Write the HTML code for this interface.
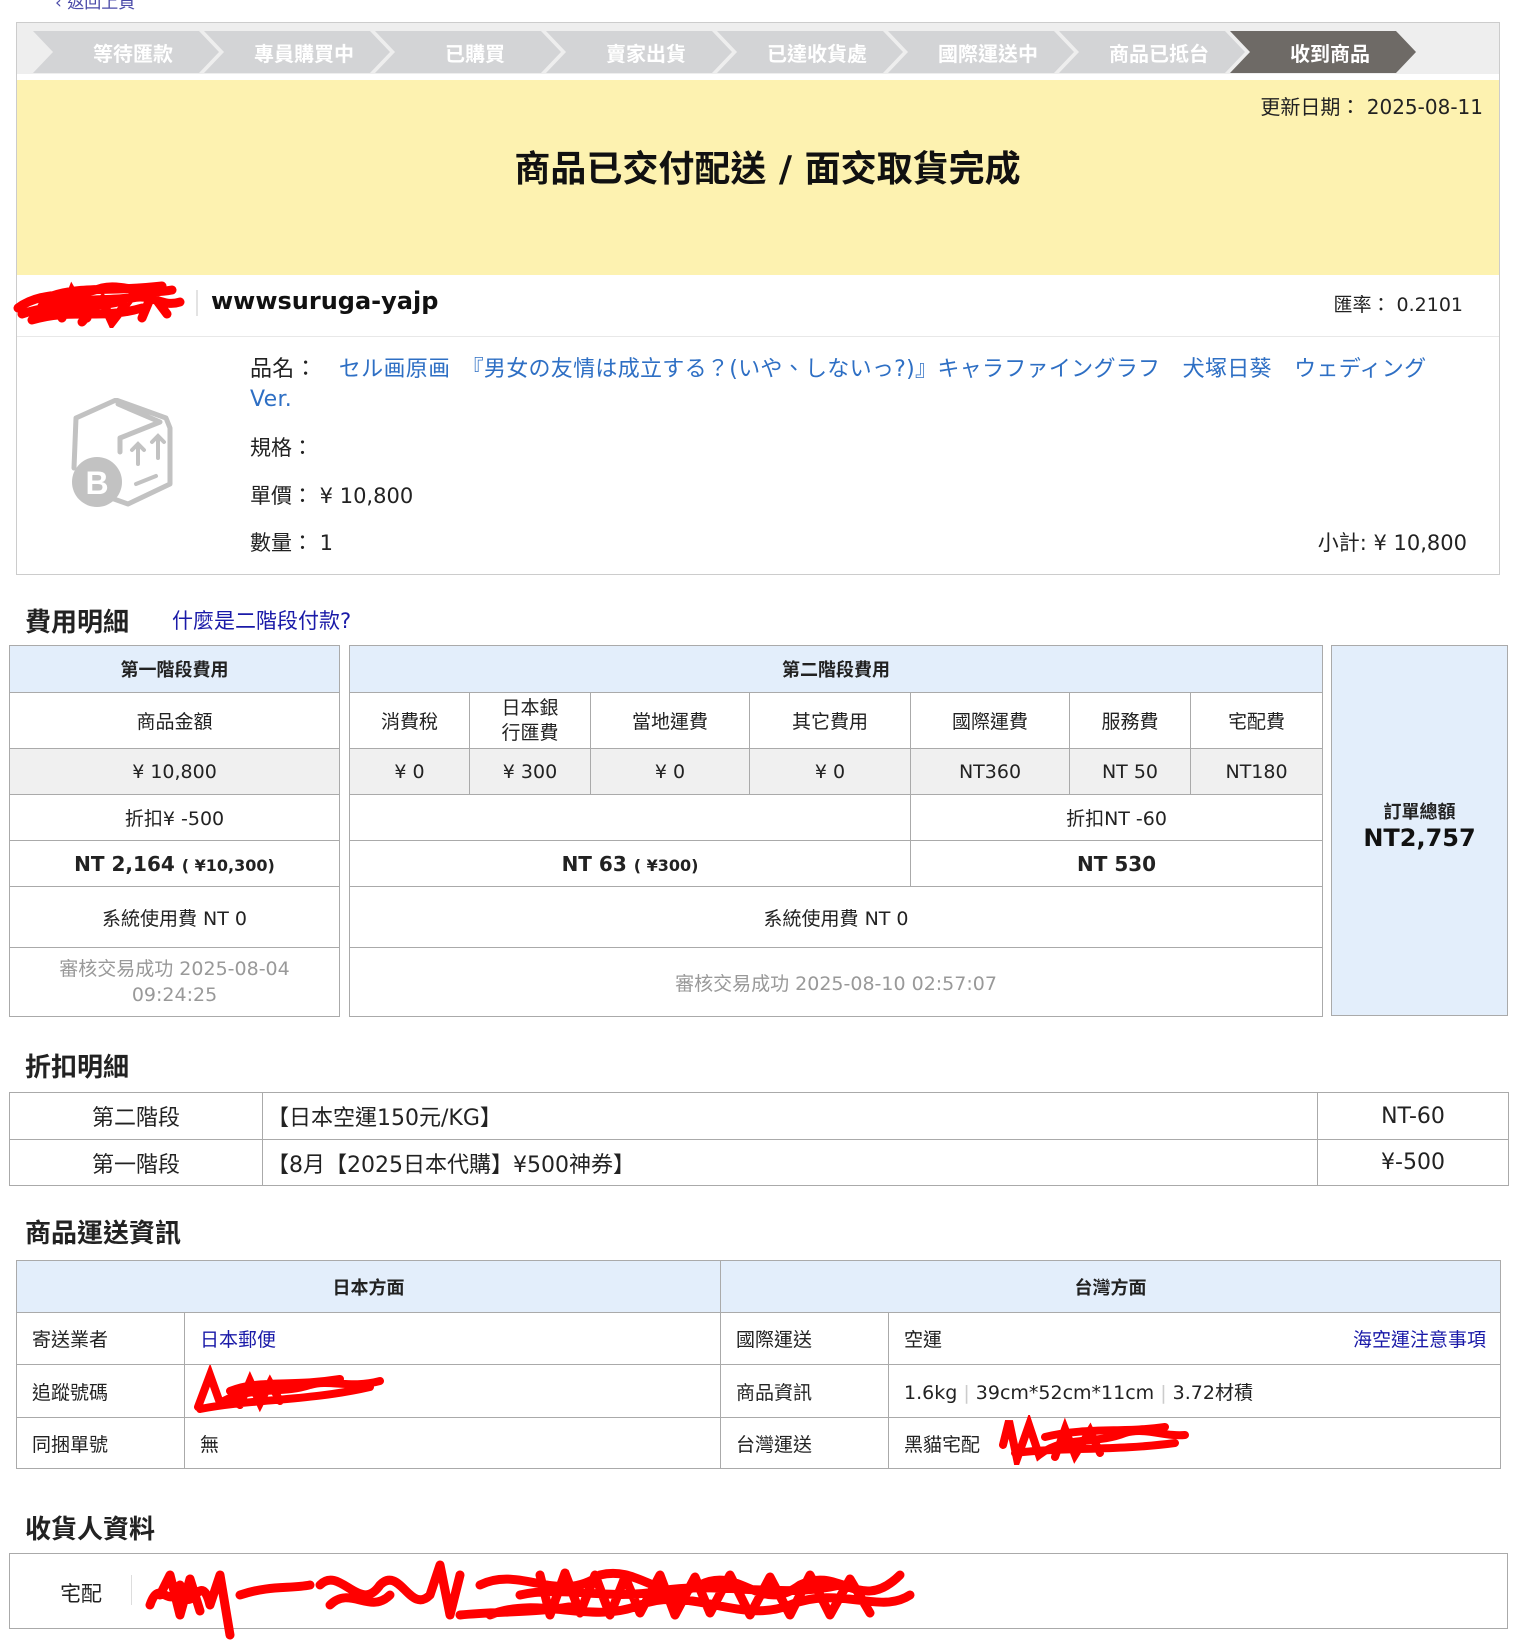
<!DOCTYPE html>
<html><head><meta charset="utf-8">
<style>
*{margin:0;padding:0;box-sizing:border-box}
body{width:1535px;height:1648px;background:#fff;position:relative;font-family:"DejaVu Sans","Noto Sans CJK TC",sans-serif;color:#222;overflow:hidden}
.a{position:absolute}
.step{position:absolute;top:31px;height:42px;width:186px;background:#d3d4d6;color:#fff;font-size:20px;font-weight:bold;display:flex;align-items:center;justify-content:center;padding-left:14px;clip-path:polygon(0 0,166px 0,186px 50%,166px 100%,0 100%,20px 50%)}
table{border-collapse:collapse;position:absolute;table-layout:fixed}
td{border:1px solid #aaa;text-align:center;font-size:19px;padding:0 4px}
.hd{background:#e3eefb;font-weight:bold;font-size:18px}
.gr{background:#f0f0f0}
.b{font-weight:bold;font-size:20px}
.mut{color:#999}
h2{position:absolute;font-size:26px;font-weight:bold;color:#222;left:25px}
.blue{color:#1a1aa8}
.lb{color:#2e6fc4}
.sh td{text-align:left;padding-left:15px}
</style></head><body>
<div class="a" style="left:55px;top:-12px;font-size:17px;color:#4a4aa8">‹ 返回上頁</div>

<div class="a" style="left:16px;top:22px;width:1484px;height:553px;border:1px solid #ccc"></div>
<div class="a" style="left:17px;top:23px;width:1482px;height:51px;background:#eeeeee"></div>
<div class="step" style="left:33px">等待匯款</div>
<div class="step" style="left:204px">專員購買中</div>
<div class="step" style="left:375px">已購買</div>
<div class="step" style="left:546px">賣家出貨</div>
<div class="step" style="left:717px">已達收貨處</div>
<div class="step" style="left:888px">國際運送中</div>
<div class="step" style="left:1059px">商品已抵台</div>
<div class="step" style="left:1230px;background:#6e6a66">收到商品</div>

<div class="a" style="left:17px;top:80px;width:1482px;height:195px;background:#fdf2b0"></div>
<div class="a" style="right:52px;top:91px;font-size:20px;color:#222">更新日期： 2025-08-11</div>
<div class="a" style="left:0;width:1535px;top:140px;text-align:center;font-size:36px;font-weight:bold;color:#111">商品已交付配送 / 面交取貨完成</div>

<svg class="a" style="left:12px;top:278px" width="180" height="50"><path d="M6 30 C30 12 60 20 90 10 C110 5 130 18 160 12 M10 36 C50 22 80 34 120 20 C140 15 150 30 168 24 M20 42 C60 30 90 42 130 30 M40 18 C70 8 100 14 150 8 M70 44 L90 22 L100 44 L120 18 M30 28 C60 18 100 26 140 16 M50 40 L60 14 L75 40 M130 40 L140 16 L155 36" stroke="#f00" stroke-width="9" fill="none" stroke-linecap="round"/></svg>
<div class="a" style="left:196px;top:290px;width:2px;height:26px;background:#e3e3e3"></div>
<div class="a" style="left:211px;top:287px;font-size:24px;font-weight:bold;color:#111">wwwsuruga-yajp</div>
<div class="a" style="right:72px;top:290px;font-size:19px">匯率： 0.2101</div>
<div class="a" style="left:17px;top:336px;width:1482px;height:1px;background:#e8e8e8"></div>

<svg class="a" style="left:70px;top:398px" width="108" height="112" viewBox="0 0 108 112">
<path d="M6 20 L46 2 L96 20 L100 30 L100 86 L58 106 L30 96 M6 20 L4 70 M48 6 L90 24 L50 40 L50 54" stroke="#c2c2c2" stroke-width="5" fill="none" stroke-linejoin="round" stroke-linecap="round"/>
<path d="M62 52 L68 46 L74 52 M68 48 L68 66 M82 44 L88 38 L94 44 M88 40 L88 60 M66 86 L86 78" stroke="#c2c2c2" stroke-width="4" fill="none" stroke-linecap="round"/>
<circle cx="27" cy="84" r="25" fill="#c2c2c2"/>
<text x="27" y="96" font-size="32" font-weight="bold" fill="#fff" text-anchor="middle" font-family="Liberation Sans">B</text>
</svg>

<div class="a" style="left:250px;top:355px;width:1250px;font-size:22px;line-height:30px;letter-spacing:0.3px"><span>品名：</span>&nbsp;&nbsp;&nbsp;<span class="lb">セル画原画　『男女の友情は成立する？(いや、しないっ?)』キャラファイングラフ　犬塚日葵　ウェディング<br>Ver.</span></div>
<div class="a" style="left:250px;top:432px;font-size:21px">規格：</div>
<div class="a" style="left:250px;top:480px;font-size:21px">單價： ¥ 10,800</div>
<div class="a" style="left:250px;top:527px;font-size:21px">數量： 1</div>
<div class="a" style="right:68px;top:527px;font-size:21px">小計: ¥ 10,800</div>

<h2 style="top:602px">費用明細</h2>
<div class="a blue" style="left:172px;top:605px;font-size:21px">什麼是二階段付款?</div>

<table style="left:9px;top:645px;width:331px">
<tr style="height:47px"><td class="hd">第一階段費用</td></tr>
<tr style="height:56px"><td>商品金額</td></tr>
<tr style="height:46px"><td class="gr">¥ 10,800</td></tr>
<tr style="height:46px"><td>折扣¥ -500</td></tr>
<tr style="height:46px"><td class="b">NT 2,164 <span style="font-size:16px">( ¥10,300)</span></td></tr>
<tr style="height:61px"><td>系統使用費 NT 0</td></tr>
<tr style="height:69px"><td class="mut" style="line-height:26px">審核交易成功 2025-08-04<br>09:24:25</td></tr>
</table>

<table style="left:349px;top:645px;width:973px">
<colgroup><col style="width:120px"><col style="width:121px"><col style="width:159px"><col style="width:161px"><col style="width:159px"><col style="width:121px"><col style="width:132px"></colgroup>
<tr style="height:47px"><td class="hd" colspan="7">第二階段費用</td></tr>
<tr style="height:56px"><td>消費稅</td><td style="line-height:25px">日本銀<br>行匯費</td><td>當地運費</td><td>其它費用</td><td>國際運費</td><td>服務費</td><td>宅配費</td></tr>
<tr style="height:46px"><td class="gr">¥ 0</td><td class="gr">¥ 300</td><td class="gr">¥ 0</td><td class="gr">¥ 0</td><td class="gr">NT360</td><td class="gr">NT 50</td><td class="gr">NT180</td></tr>
<tr style="height:46px"><td colspan="4"></td><td colspan="3">折扣NT -60</td></tr>
<tr style="height:46px"><td colspan="4" class="b">NT 63 <span style="font-size:16px">( ¥300)</span></td><td colspan="3" class="b">NT 530</td></tr>
<tr style="height:61px"><td colspan="7">系統使用費 NT 0</td></tr>
<tr style="height:69px"><td colspan="7" class="mut">審核交易成功 2025-08-10 02:57:07</td></tr>
</table>

<div class="a" style="left:1331px;top:645px;width:177px;height:371px;background:#e3eefb;border:1px solid #aaa;text-align:center;padding-top:152px">
<div style="font-size:18px;font-weight:bold">訂單總額</div>
<div style="font-size:24px;font-weight:bold;color:#111">NT2,757</div></div>

<h2 style="top:1047px">折扣明細</h2>
<table style="left:9px;top:1092px;width:1499px">
<colgroup><col style="width:253px"><col style="width:1055px"><col style="width:191px"></colgroup>
<tr style="height:47px"><td style="font-size:22px">第二階段</td><td style="text-align:left;font-size:22px;padding-left:4px">【日本空運150元/KG】</td><td style="font-size:22px">NT-60</td></tr>
<tr style="height:46px"><td style="font-size:22px">第一階段</td><td style="text-align:left;font-size:22px;padding-left:4px">【8月【2025日本代購】¥500神券】</td><td style="font-size:22px">¥-500</td></tr>
</table>

<h2 style="top:1213px">商品運送資訊</h2>
<table class="sh" style="left:16px;top:1260px;width:1484px">
<colgroup><col style="width:168px"><col style="width:536px"><col style="width:168px"><col style="width:612px"></colgroup>
<tr style="height:52px"><td class="hd" colspan="2" style="text-align:center;padding:0">日本方面</td><td class="hd" colspan="2" style="text-align:center;padding:0">台灣方面</td></tr>
<tr style="height:52px"><td>寄送業者</td><td class="blue">日本郵便</td><td>國際運送</td><td>空運<span class="blue" style="float:right;margin-right:10px">海空運注意事項</span></td></tr>
<tr style="height:53px"><td>追蹤號碼</td><td></td><td>商品資訊</td><td>1.6kg <span style="color:#ccc">|</span> 39cm*52cm*11cm <span style="color:#ccc">|</span> 3.72材積</td></tr>
<tr style="height:51px"><td>同捆單號</td><td>無</td><td>台灣運送</td><td>黑貓宅配</td></tr>
</table>
<svg class="a" style="left:190px;top:1365px" width="200" height="50"><path d="M8 42 L20 10 L30 38 C60 20 90 30 120 20 C140 14 160 24 190 16 M10 44 C60 34 120 36 180 22 M40 26 C70 14 100 22 150 14 M50 40 L60 16 L70 38 L80 18 L90 36" stroke="#f00" stroke-width="8" fill="none" stroke-linecap="round"/></svg>
<svg class="a" style="left:995px;top:1415px" width="200" height="50"><path d="M8 30 L14 6 L22 44 L34 10 L44 40 C70 20 100 30 130 18 C150 12 170 22 190 20 M20 38 C70 32 120 36 180 28 M50 22 C90 12 130 18 170 12 M60 42 L70 14 L80 40 L95 16 L105 38" stroke="#f00" stroke-width="8" fill="none" stroke-linecap="round"/></svg>

<h2 style="top:1509px">收貨人資料</h2>
<div class="a" style="left:9px;top:1553px;width:1499px;height:76px;border:1px solid #aaa"></div>
<div class="a" style="left:60px;top:1578px;font-size:21px">宅配</div>
<div class="a" style="left:131px;top:1575px;width:1px;height:30px;background:#ddd"></div>
<svg class="a" style="left:140px;top:1555px" width="780" height="90"><path d="M10 50 C20 20 30 60 40 30 C50 70 60 10 70 50 L80 20 L90 80 M100 40 C130 30 150 34 170 30 M180 30 C200 10 220 60 240 30 C260 10 270 60 290 40 L300 10 L310 60 L320 20 M320 60 C360 56 400 58 440 50 M340 30 C380 10 420 50 460 20 C500 10 520 50 560 30 C600 10 620 60 660 30 C700 10 720 60 760 20 M350 60 C400 40 450 70 500 50 C550 30 600 70 650 50 C700 30 740 60 770 40 M380 40 C420 30 470 46 520 36 C580 26 640 44 700 30 M20 40 L30 20 L40 60 L50 24 L60 56 M190 50 C210 30 230 60 250 40 M400 20 L410 60 L425 18 L440 58 L455 20 L470 60 L485 22 L500 58 L520 20 L535 60 L555 22 L570 58 L590 20 L610 60 L630 22 L650 60 L670 20 L690 60 L710 24 L730 58" stroke="#f00" stroke-width="9" fill="none" stroke-linecap="round" stroke-linejoin="round"/></svg>
</body></html>
